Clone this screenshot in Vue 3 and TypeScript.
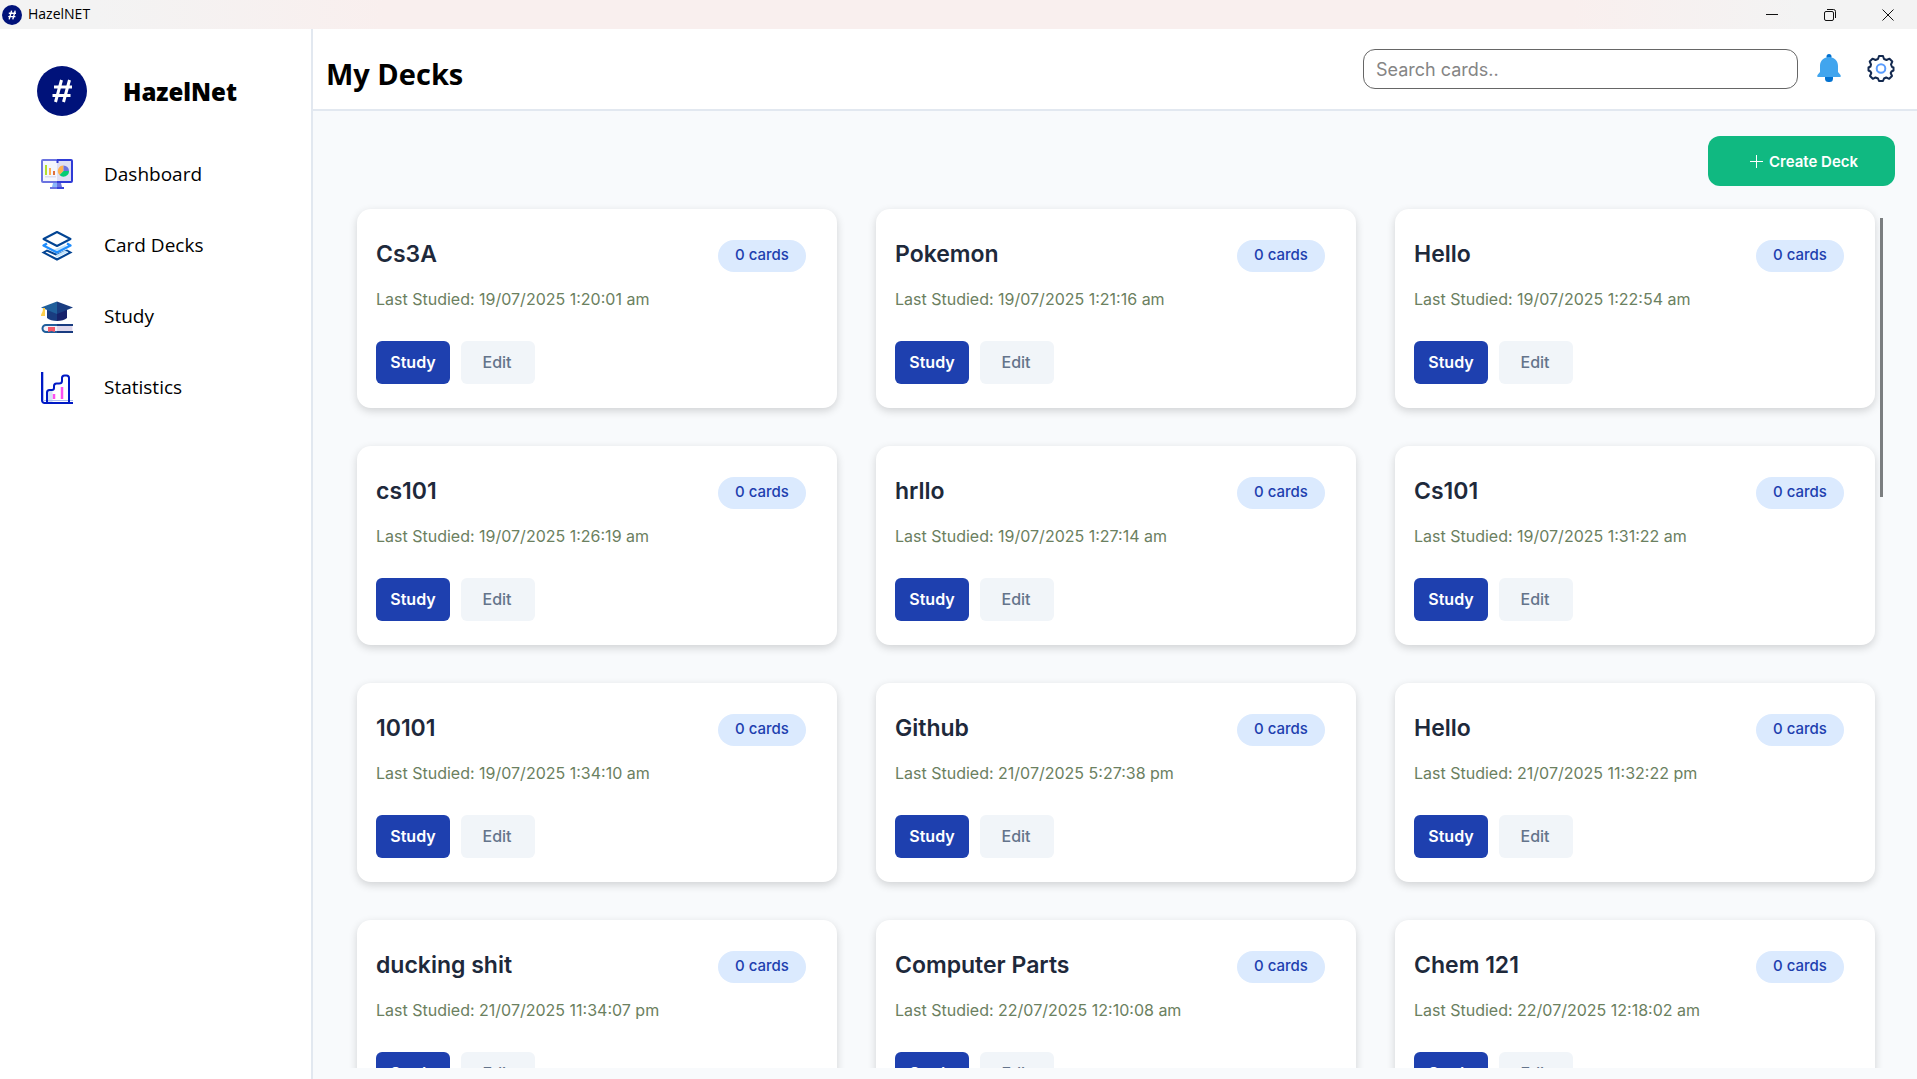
<script setup lang="ts">
interface Deck {
  id: number
  name: string
  studied: string
  cards: number
}

type IconName = 'dashboard' | 'decks' | 'study' | 'statistics'

interface NavItem {
  label: string
  icon: IconName
}

const nav: NavItem[] = [
  { label: 'Dashboard', icon: 'dashboard' },
  { label: 'Card Decks', icon: 'decks' },
  { label: 'Study', icon: 'study' },
  { label: 'Statistics', icon: 'statistics' },
]

const decks: Deck[] = [
  { id: 1, name: 'Cs3A', studied: '19/07/2025 1:20:01 am', cards: 0 },
  { id: 2, name: 'Pokemon', studied: '19/07/2025 1:21:16 am', cards: 0 },
  { id: 3, name: 'Hello', studied: '19/07/2025 1:22:54 am', cards: 0 },
  { id: 4, name: 'cs101', studied: '19/07/2025 1:26:19 am', cards: 0 },
  { id: 5, name: 'hrllo', studied: '19/07/2025 1:27:14 am', cards: 0 },
  { id: 6, name: 'Cs101', studied: '19/07/2025 1:31:22 am', cards: 0 },
  { id: 7, name: '10101', studied: '19/07/2025 1:34:10 am', cards: 0 },
  { id: 8, name: 'Github', studied: '21/07/2025 5:27:38 pm', cards: 0 },
  { id: 9, name: 'Hello', studied: '21/07/2025 11:32:22 pm', cards: 0 },
  { id: 10, name: 'ducking shit', studied: '21/07/2025 11:34:07 pm', cards: 0 },
  { id: 11, name: 'Computer Parts', studied: '22/07/2025 12:10:08 am', cards: 0 },
  { id: 12, name: 'Chem 121', studied: '22/07/2025 12:18:02 am', cards: 0 },
]
</script>

<template>
  <div class="window">
    <div class="titlebar">
      <svg class="app-icon" viewBox="0 0 50 50" aria-hidden="true">
        <circle cx="25" cy="25" r="25" fill="#00127a" />
        <path d="M24 14l-6 22M33 14l-6 22M17 20.500h18M15.500 29h18" stroke="#fff" stroke-width="3.500" fill="none" />
      </svg>
      <span class="app-title">HazelNET</span>
      <div class="window-controls">
        <button type="button" aria-label="Minimize">
          <svg viewBox="0 0 14 14"><path d="M1 6.500h12" /></svg>
        </button>
        <button type="button" aria-label="Restore">
          <svg viewBox="0 0 14 14">
            <rect x="1.500" y="3.500" width="9" height="9" rx="1.500" />
            <path d="M4 1.500h6.500a2 2 0 0 1 2 2V10" />
          </svg>
        </button>
        <button type="button" aria-label="Close">
          <svg viewBox="0 0 14 14"><path d="M1.500 1.500l11 11M12.500 1.500l-11 11" /></svg>
        </button>
      </div>
    </div>

    <div class="body">
      <aside class="sidebar">
        <div class="brand">
          <svg class="logo" viewBox="0 0 50 50" aria-hidden="true">
            <circle cx="25" cy="25" r="25" fill="#00127a" />
            <path d="M24.500 14l-6 22M32.500 14l-6 22M17 21h18M15.500 29.500h18" stroke="#fff" stroke-width="3" fill="none" />
          </svg>
          <span class="brand-name">HazelNet</span>
        </div>

        <nav class="nav">
          <a v-for="item in nav" :key="item.label" href="#" class="nav-link">
            <svg v-if="item.icon === 'dashboard'" viewBox="0 0 32 32" aria-hidden="true">
              <path d="M9 28h7v2H9z" fill="#6b73e0" />
              <path d="M16 28h7v2h-7z" fill="#3a45d8" />
              <path d="M12 24h4v4h-5z" fill="#8ab6fb" />
              <path d="M16 24h4l1 4h-5z" fill="#6b73e0" />
              <path d="M1 1h15v22H1z" fill="#f4f6fd" />
              <path d="M16 1h15v22H16z" fill="#e0dff3" />
              <path d="M16 1H2a1 1 0 0 0-1 1v20a1 1 0 0 0 1 1h14" fill="none" stroke="#6b73e0" stroke-width="2" />
              <path d="M16 1h14a1 1 0 0 1 1 1v20a1 1 0 0 1-1 1H16M16.500 1v3" fill="none" stroke="#2f3bd6" stroke-width="2" />
              <path d="M4 17h11v1.500H4z" fill="#dcdcf0" />
              <path d="M4 6h2v10H4z" fill="#b4df2f" />
              <path d="M8 9h2v7H8z" fill="#ffad4d" />
              <path d="M12 12h2v4h-2z" fill="#e0713c" />
              <path d="M22.500 12V6.500a5.500 5.500 0 0 0-4 9.400z" fill="#ffb04f" />
              <path d="M22.500 12V6.500A5.500 5.500 0 0 1 28 12z" fill="#6b73e0" />
              <path d="M22.500 12H28a5.500 5.500 0 0 1-9.500 3.900z" fill="#05cc73" />
            </svg>
            <svg v-else-if="item.icon === 'decks'" viewBox="0 0 32 32" aria-hidden="true">
              <path d="M2.500 22.500L6 20.500l10 4.500 10-4.500 3.500 2L16 29.500z" fill="#fff" stroke="#024493" stroke-width="2" />
              <path d="M15 28l12-6-3-1.500-9 4.500z" fill="#c3e4fc" />
              <path d="M7 15h18l-9 7z" fill="#fff" />
              <path d="M12 20l12-5 2 1-10 6z" fill="#c3e4fc" />
              <path d="M6 13.500L2.500 15.500 16 22.500l13.500-7-3.500-2" fill="none" stroke="#1e8dfd" stroke-width="2.400" stroke-linejoin="round" />
              <path d="M2.500 9L16 2l13.500 7L16 16z" fill="#fff" stroke="#024493" stroke-width="2" stroke-linejoin="round" />
            </svg>
            <svg v-else-if="item.icon === 'study'" viewBox="0 0 32 32" aria-hidden="true">
              <path d="M6 9h10v11c-4 0-8-1-10-3z" fill="#193c80" />
              <path d="M16 9h10v8c-2 2-6 3-10 3z" fill="#16226a" />
              <path d="M16 .500L0 6.500 16 13z" fill="#205f9b" />
              <path d="M16 .500l16 6L16 13z" fill="#193c80" />
              <path d="M2 7h2v8H0c0-3 2-3 2-8z" fill="#ffd04d" />
              <path d="M32 24H4.500a3.500 3.500 0 0 0 0 7H32z" fill="#f4effa" />
              <path d="M16 25h15v5H16z" fill="#dfd8ec" />
              <path d="M16 24H5a3.500 3.500 0 0 0 0 7h11" fill="none" stroke="#205f9b" stroke-width="2" />
              <path d="M16 24h16M16 31h16" fill="none" stroke="#193c80" stroke-width="2" />
              <path d="M7 26h7v5l-3.500-1L7 31z" fill="#f25a6b" />
            </svg>
            <svg v-else viewBox="0 0 32 32" aria-hidden="true">
              <path d="M6.500 30V20l2-1.500h3V30z" fill="#d5e2f6" />
              <path d="M2.500 0v28.500H32" fill="none" stroke="#aebdf0" stroke-width="1" />
              <path d="M1 0v28.500a2.500 2.500 0 0 0 2.500 2.500H32" fill="none" stroke="#0019c5" stroke-width="2" />
              <path d="M6 30v-9.500Q6 18 8.500 18H11q2 0 2-2v-2q0-2.500 2.500-2.500H18q3 0 3-2.500V6q0-2.500 2.500-2.500h2Q28 3.500 28 6v24" fill="none" stroke="#0019c5" stroke-width="2" />
              <path d="M13 22v5M21 15v12" fill="none" stroke="#fd4ff0" stroke-width="2.500" />
            </svg>
            <span>{{ item.label }}</span>
          </a>
        </nav>
      </aside>

      <main class="main">
        <header class="header">
          <h1>My Decks</h1>
          <input type="search" class="search" placeholder="Search cards.." aria-label="Search cards" />
          <div class="header-icons">
            <button type="button" aria-label="Notifications">
              <svg viewBox="0 0 28 28">
                <circle cx="14" cy="2.500" r="2.500" fill="#0372d0" />
                <path d="M10 22h8v2.500a3.500 3.500 0 0 1-3.500 3.500h-1a3.500 3.500 0 0 1-3.500-3.500z" fill="#0372d0" />
                <path d="M14 3c-5 0-9 3.500-9 9v6l-2.500 3q-1 2 .500 2h22q1.500 0 .500-2L23 18v-6c0-5.500-4-9-9-9z" fill="#41a5ee" />
              </svg>
            </button>
            <button type="button" aria-label="Settings">
              <svg viewBox="0 0 28 28" fill="none">
                <path
                  d="M12 2h4l1 3 2.500 1 3-1.300 2.800 2.800L24 10.500l1 2.500 1.500.500v3L24.500 17.500l-.800 1.500 1.300 3-2.800 2.800-3-1.300-2.200 1L16 27h-4l-1-2.500-2.500-1-2.700 1.300L3 22l1.300-3-.800-1.500L1.500 16.500v-3L3.500 12.500 4 10.500 2.700 7.500l2.800-2.800L8.500 6 11 5z"
                  stroke="#13294f"
                  stroke-width="2"
                  stroke-linejoin="round"
                />
                <circle cx="14" cy="14.500" r="4.300" stroke="#5a9cfd" stroke-width="2" />
              </svg>
            </button>
          </div>
        </header>

        <div class="toolbar">
          <button type="button" class="create">
            <svg viewBox="0 0 14 14" aria-hidden="true"><path d="M7.500 1v13M1 7.500h13" /></svg>
            <span>Create Deck</span>
          </button>
        </div>

        <div class="deck-area">
          <section class="decks">
            <article v-for="deck in decks" :key="deck.id" class="card">
              <div class="card-head">
                <h2>{{ deck.name }}</h2>
                <span class="badge">{{ deck.cards }} cards</span>
              </div>
              <p class="studied">Last Studied: {{ deck.studied }}</p>
              <div class="actions">
                <button type="button" class="action primary">Study</button>
                <button type="button" class="action">Edit</button>
              </div>
            </article>
          </section>
          <div class="scroll-thumb"></div>
        </div>
      </main>
    </div>
  </div>
</template>

<style>
body {
  margin: 0;
  background: #f8fafc;
}
</style>

<style scoped>
.window {
  display: flex;
  flex-direction: column;
  height: 100vh;
  overflow: hidden;
  font-family: Inter, sans-serif;
  color: #000;
}

button {
  border: 0;
  padding: 0;
  background: none;
  font-family: inherit;
}

.titlebar {
  display: flex;
  align-items: center;
  flex: none;
  height: 29px;
  padding-left: 2px;
  background: linear-gradient(90deg, #f3f3f3 5%, #f9efee 20%, #f9efee 82%, #f3f3f3 94%);
}

.app-icon {
  width: 20px;
  height: 20px;
}

.app-title {
  margin-left: 6px;
  padding-bottom: 1px;
  font-family: "Open Sans", "Noto Sans", sans-serif;
  font-size: 14px;
  line-height: 20px;
}

.window-controls {
  display: flex;
  margin-left: auto;
}

.window-controls button {
  display: grid;
  place-items: center;
  width: 58px;
  height: 28px;
}

.window-controls svg {
  width: 14px;
  height: 14px;
  fill: none;
  stroke: #111;
  stroke-width: 1;
}

.body {
  display: flex;
  flex: 1;
  min-height: 0;
}

.sidebar {
  box-sizing: border-box;
  flex: none;
  width: 313px;
  border-right: 2px solid #e2e8f0;
  background: #fff;
  font-family: "Open Sans", "Noto Sans", sans-serif;
}

.brand {
  display: flex;
  align-items: center;
  gap: 36px;
  padding: 37px 0 23px 37px;
}

.logo {
  width: 50px;
  height: 50px;
}

.brand-name {
  padding-top: 2px;
  font-size: 24px;
  font-weight: 800;
  line-height: 32px;
}

.nav-link {
  display: flex;
  align-items: center;
  gap: 31px;
  height: 71px;
  padding-left: 41px;
  color: #000;
  font-size: 19px;
  line-height: 26px;
  text-decoration: none;
}

.nav-link span {
  padding-bottom: 2px;
}

.nav-link svg {
  width: 32px;
  height: 32px;
}

.main {
  display: flex;
  flex-direction: column;
  flex: 1;
  min-width: 0;
  background: #f8fafc;
}

.header {
  display: flex;
  align-items: center;
  flex: none;
  box-sizing: border-box;
  height: 82px;
  padding: 0 22px 0 13px;
  border-bottom: 2px solid #e2e8f0;
  background: #fff;
}

.header h1 {
  margin: 10px auto 0 0;
  font-family: "Open Sans", "Noto Sans", sans-serif;
  font-size: 29px;
  font-weight: 700;
  line-height: 40px;
}

.search {
  box-sizing: border-box;
  width: 435px;
  height: 40px;
  padding: 0 12px;
  border: 1px solid #666;
  border-radius: 12px;
  background: #fff;
  font-family: inherit;
  font-size: 18px;
}

.search::placeholder {
  color: #858585;
}

.header-icons {
  display: flex;
  gap: 24px;
  padding-bottom: 2px;
  margin-left: 17px;
}

.header-icons svg {
  display: block;
  width: 28px;
  height: 28px;
}

.toolbar {
  display: flex;
  flex: none;
  justify-content: flex-end;
  padding: 25px 22px 12px;
}

.create {
  display: flex;
  align-items: center;
  justify-content: center;
  gap: 6px;
  width: 187px;
  height: 50px;
  padding-left: 4px;
  border-radius: 12px;
  background: #10b981;
  color: #fff;
  font-size: 15px;
  font-weight: 600;
}

.create svg {
  width: 14px;
  height: 14px;
  fill: none;
  stroke: #fff;
  stroke-width: 1;
}

.deck-area {
  position: relative;
  flex: 1;
  min-height: 0;
  margin-bottom: 11px;
  overflow: hidden;
}

.decks {
  display: grid;
  grid-template-columns: repeat(3, 1fr);
  gap: 38px 39px;
  padding: 11px 42px 0 44px;
}

.scroll-thumb {
  position: absolute;
  top: 20px;
  right: 34px;
  width: 3px;
  height: 279px;
  background: #7b7e80;
}

.card {
  box-sizing: border-box;
  height: 199px;
  padding: 31px 31px 0 19px;
  border-radius: 14px;
  background: #fff;
  box-shadow: 0 3px 8px rgba(0, 0, 0, 0.16);
}

.card-head {
  display: flex;
  justify-content: space-between;
}

.card h2 {
  margin: 0;
  color: #1e293b;
  font-size: 23px;
  font-weight: 600;
  line-height: 28px;
}

.badge {
  box-sizing: border-box;
  width: 88px;
  height: 32px;
  border-radius: 16px;
  background: #dbeafe;
  color: #1e40af;
  font-size: 15px;
  font-weight: 500;
  line-height: 30px;
  text-align: center;
}

.studied {
  margin: 17px 0 32px;
  color: #6b8060;
  font-size: 16px;
  line-height: 20px;
}

.actions {
  display: flex;
  gap: 11px;
}

.action {
  width: 74px;
  height: 43px;
  padding: 0 2px 2px 0;
  border-radius: 6px;
  background: #f1f5f9;
  color: #64748b;
  font-size: 16px;
  font-weight: 500;
}

.action.primary {
  padding-right: 0;
  background: #1e40af;
  color: #fff;
  font-weight: 600;
}
</style>
